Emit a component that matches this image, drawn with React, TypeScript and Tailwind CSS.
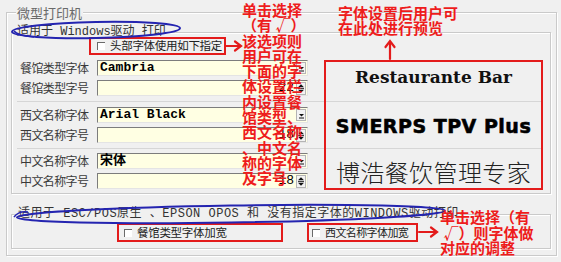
import React from "react";

const cjk = "font-['Noto_Sans_CJK_SC',sans-serif]";
const mono = "font-['Liberation_Mono','Noto_Sans_CJK_SC',monospace]";

const Check = () => (
  <span className="inline-block w-[8px] h-[8px] shrink-0 border-t border-l border-[#6a6a6a] bg-white" />
);

const ComboBtn = () => (
  <div className="ml-auto mr-[1px] w-[10px] h-[12px] flex items-center justify-center bg-[#f3f3f3] border border-[#b4b4b4]">
    <svg width="7" height="7" viewBox="0 0 7 7">
      <path d="M1 2h5L3.5 4.6z" fill="#111" />
      <path d="M1 6h5" stroke="#111" strokeWidth="1" />
    </svg>
  </div>
);

const Spinner = () => (
  <div className="mr-[1px] w-[10px] h-[13px] flex items-center justify-center bg-[#f3f3f3] border border-[#b4b4b4]">
    <svg width="8" height="11" viewBox="0 0 8 11">
      <path d="M1 4.2L4 1.2l3 3z" fill="#111" />
      <path d="M1 5.5h6" stroke="#111" strokeWidth="0.8" />
      <path d="M1 6.8l3 3 3-3z" fill="#111" />
    </svg>
  </div>
);

const Row = ({ label, value, kind }: { label: string; value: string; kind: "font" | "size" }) => (
  <div className="h-[20px] flex items-center">
    <span className={`w-[80px] pl-[3px] text-[12px] tracking-[-0.6px] text-[#3a3a3a] ${cjk}`}>{label}</span>
    <div className="w-[211px] h-[16px] flex items-center bg-[#ffffe3] border border-t-[#7c7c7c] border-l-[#7c7c7c] border-b-[#e4e4e4] border-r-[#e4e4e4]">
      {kind === "font" ? (
        <>
          <span className={`pl-[2px] text-[13px] leading-[14px] font-bold text-black ${mono}`}>{value}</span>
          <ComboBtn />
        </>
      ) : (
        <>
          <span className={`ml-auto pr-[2px] text-[13px] leading-[14px] text-black ${mono}`}>{value}</span>
          <Spinner />
        </>
      )}
    </div>
  </div>
);

const Group = ({
  rows,
  preview,
  className,
}: {
  rows: [string, string, string, string];
  preview: React.ReactNode;
  className: string;
}) => (
  <div className={`ml-[5px] w-[526px] flex ${className}`}>
    <div className="w-[307px]">
      <Row label={rows[0]} value={rows[1]} kind="font" />
      <Row label={rows[2]} value={rows[3]} kind="size" />
    </div>
    <div className="flex-1 flex items-center justify-center">{preview}</div>
  </div>
);

const Annotation = ({ lines, className }: { lines: string[]; className: string }) => (
  <div className={`absolute text-[#ee1c1c] font-bold text-[15px] ${cjk} ${className}`}>
    {lines.map((l) => (
      <div key={l} className="whitespace-pre">
        {l}
      </div>
    ))}
  </div>
);

export default function App() {
  return (
    <div className="relative w-[561px] h-[262px] overflow-hidden bg-[#f0f0f0] pt-[12px] pl-[6px]">
      {/* 微型打印机 */}
      <div className="w-[551px] h-[244px] px-[4px] border border-[#cacaca] shadow-[inset_1px_1px_0_#fff,1px_1px_0_#fff]">
        <div className={`-mt-[9px] ml-[5px] w-fit h-[17px] px-[1px] bg-[#f0f0f0] text-[13px] leading-[17px] text-[#6a6a6a] ${cjk}`}>
          微型打印机
        </div>

        <div className="mt-[11px] w-[540px] h-[162px] border border-[#cacaca] shadow-[inset_1px_1px_0_#fff,1px_1px_0_#fff]">
          <div className={`-mt-[9px] ml-[4px] w-fit h-[17px] px-[1px] bg-[#f0f0f0] text-[12px] leading-[17px] text-[#333] whitespace-pre ${mono}`}>
            适用于 Windows驱动 打印
          </div>
          <div className="-mt-[4px] ml-[77px] w-[137px] h-[18px] flex items-center gap-[5px] pl-[6px] border-2 border-[#e31b1b]">
            <Check />
            <span className={`text-[11.5px] tracking-[-0.3px] text-[#222] ${cjk}`}>头部字体使用如下指定</span>
          </div>

          <Group
            className="mt-[2px] h-[44px] pt-[1px]"
            rows={["餐馆类型字体", "Cambria", "餐馆类型字号", "22"]}
            preview={
              <span className="pb-[3px] font-['DejaVu_Serif',serif] font-bold text-[17px] text-[#111]">Restaurante Bar</span>
            }
          />
          <Group
            className="h-[47px] pt-[3px] border-t border-[#d6d6d6]"
            rows={["西文名称字体", "Arial Black", "西文名称字号", "18"]}
            preview={
              <span className="font-['DejaVu_Sans',sans-serif] font-bold text-[19px] tracking-[0.5px] text-black [-webkit-text-stroke:0.6px_#000]">
                SMERPS TPV Plus
              </span>
            }
          />
          <Group
            className="h-[45px] pt-[2px] border-t border-[#d6d6d6]"
            rows={["中文名称字体", "宋体", "中文名称字号", "18"]}
            preview={
              <span className={`font-light text-[24px] tracking-[0.4px] text-[#222] ${cjk}`}>博浩餐饮管理专家</span>
            }
          />
        </div>

        <div className="mt-[20px] w-[540px] h-[35px] border border-[#cacaca] shadow-[inset_1px_1px_0_#fff,1px_1px_0_#fff]">
          <div className={`-mt-[9px] ml-[5px] w-fit h-[17px] px-[1px] bg-[#f0f0f0] text-[12px] leading-[17px] tracking-[0.5px] text-[#333] whitespace-pre ${mono}`}>
            适用于 ESC/POS原生 、EPSON OPOS 和 没有指定字体的WINDOWS驱动打印
          </div>
          <div className="flex">
            <div className="ml-[105px] w-[166px] h-[19px] flex items-center gap-[5px] pl-[5px] border-2 border-[#e31b1b]">
              <Check />
              <span className={`text-[11.5px] tracking-[-0.3px] text-[#222] ${cjk}`}>餐馆类型字体加宽</span>
            </div>
            <div className="ml-[24px] w-[111px] h-[19px] flex items-center gap-[5px] pl-[3px] border-2 border-[#e31b1b]">
              <Check />
              <span className={`text-[11px] tracking-[-0.6px] text-[#222] ${cjk}`}>西文名称字体加宽</span>
            </div>
          </div>
        </div>
      </div>

      {/* annotations */}
      <div className="absolute left-[324px] top-[60px] w-[219px] h-[130px] border-2 border-[#e31b1b]" />
      <svg className="absolute inset-0 pointer-events-none" width="561" height="262" viewBox="0 0 561 262">
        <ellipse cx="96" cy="30" rx="84" ry="8" transform="rotate(-1.2 96 30)" fill="none" stroke="#2424b0" strokeWidth="2" />
        <path d="M14 31c2 3 10 5 20 6" fill="none" stroke="#2424b0" strokeWidth="1.5" />
        <ellipse cx="231" cy="214" rx="214" ry="8.5" transform="rotate(-0.9 231 214)" fill="none" stroke="#2424b0" strokeWidth="2" />
        <path d="M14 217c3-4 8-6 14-5" fill="none" stroke="#2424b0" strokeWidth="1.5" />
        <g stroke="#e31b1b" strokeWidth="2.2" fill="none" strokeLinecap="round">
          <path d="M226 46h14" />
          <path d="M235 41.5l6 4.5-6 4.5" />
          <path d="M390 59V42" />
          <path d="M385.5 47l4.5-6 4.5 6" />
          <path d="M419 232h17" />
          <path d="M431 227.5l6 4.5-6 4.5" />
        </g>
      </svg>
      <Annotation
        className="left-[242px] top-[2px] leading-[15.3px]"
        lines={["单击选择", "（有 √）", "该选项则", "用户可在", "下面的字", "体设置栏", "内设置餐", "馆类型、", "西文名称", "、中文名", "称的字体", "及字号"]}
      />
      <Annotation className="left-[338px] top-[5px] leading-[15px]" lines={["字体设置后用户可", "在此处进行预览"]} />
      <Annotation className="left-[440px] top-[209px] leading-[15.5px]" lines={["单击选择（有", " √）则字体做", "对应的调整"]} />
    </div>
  );
}
